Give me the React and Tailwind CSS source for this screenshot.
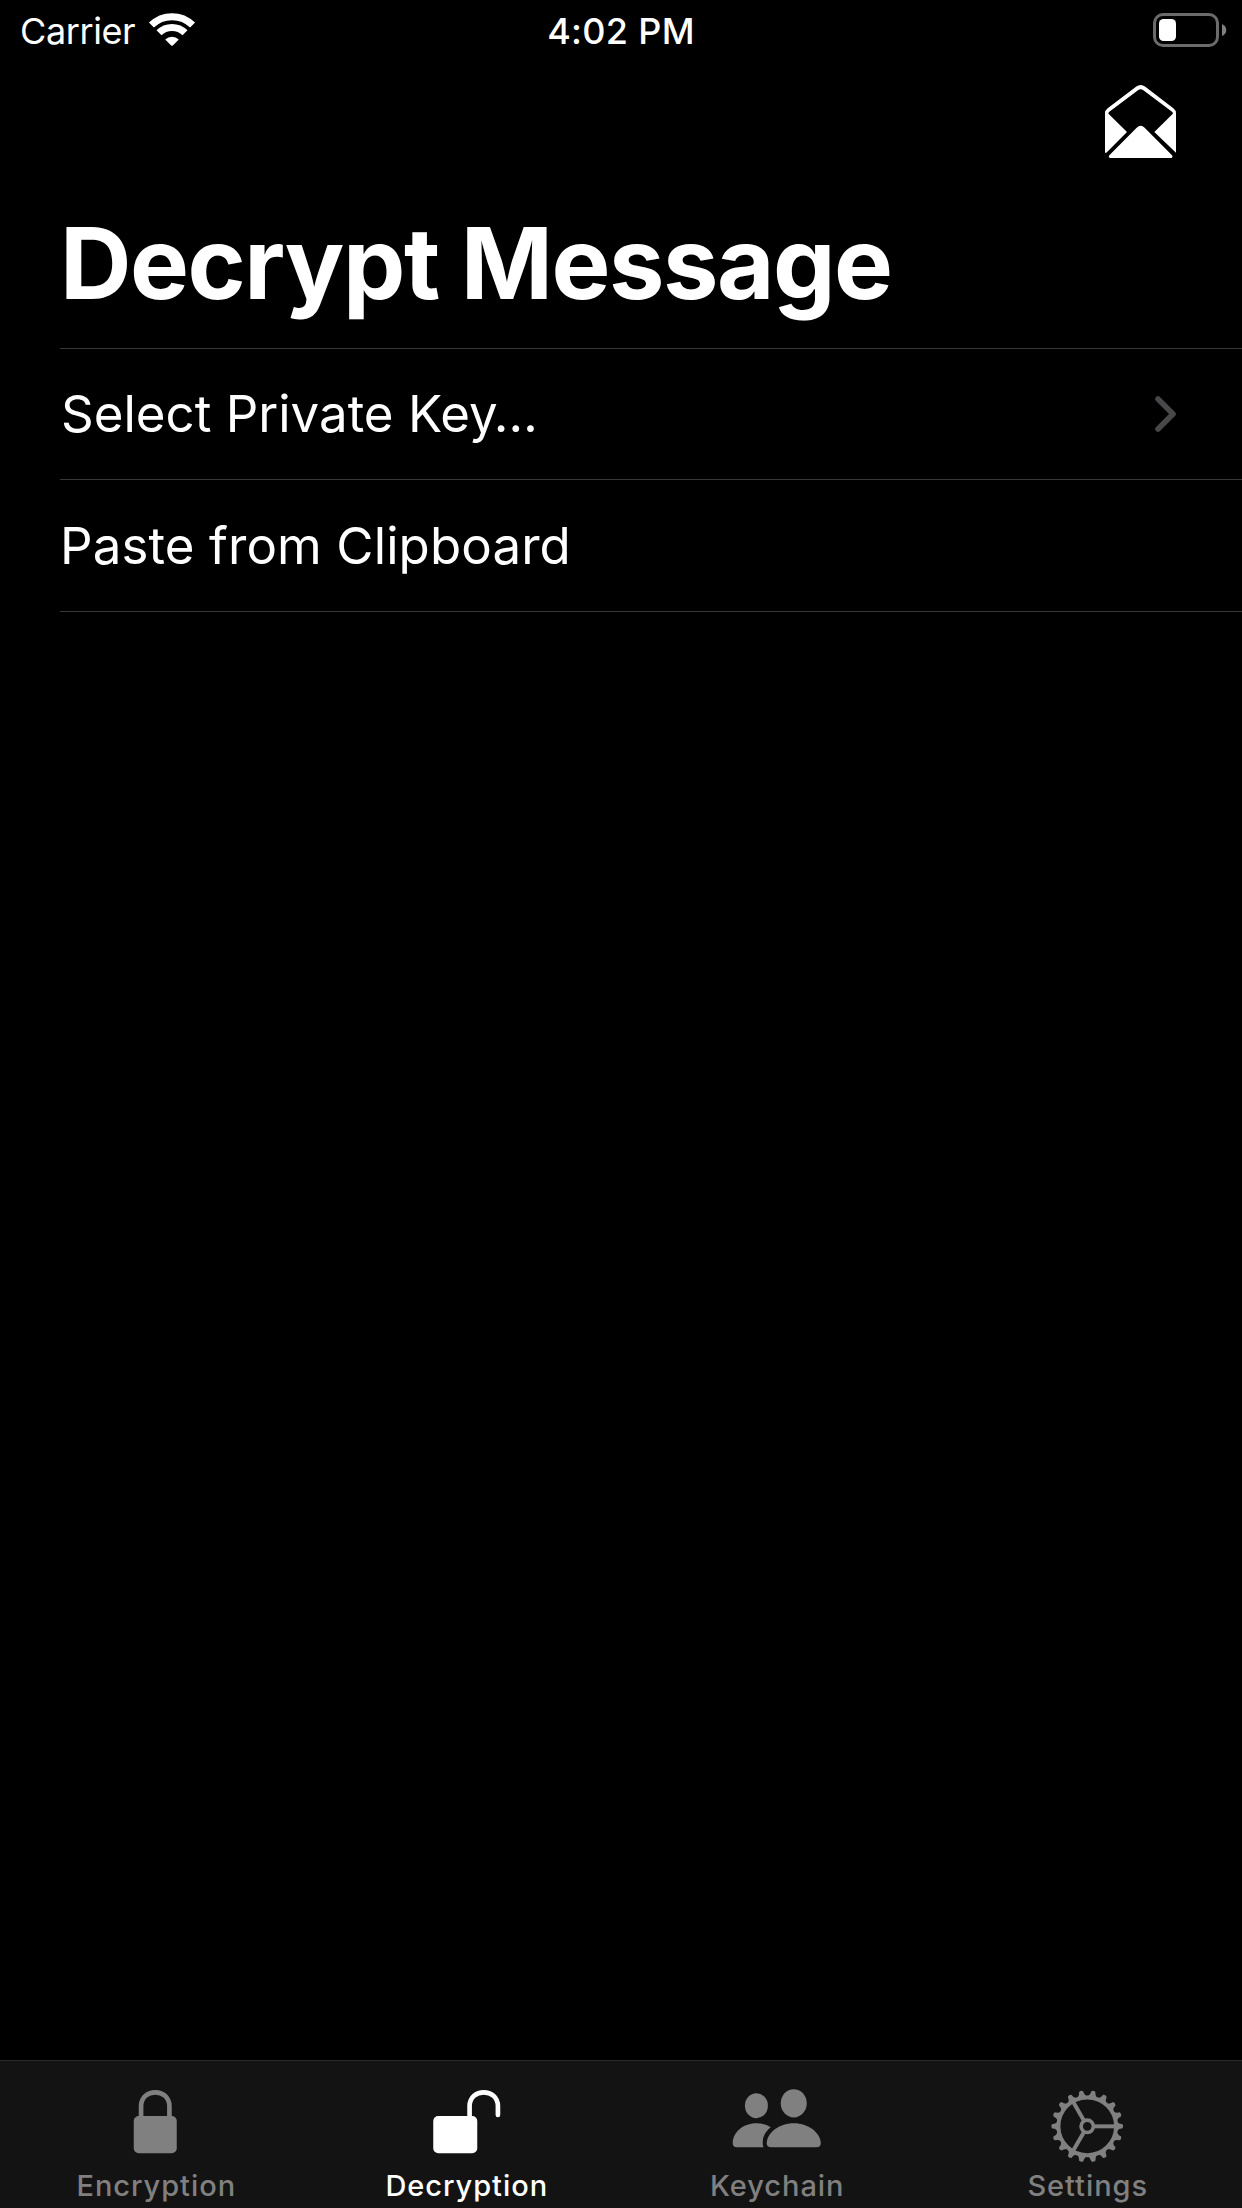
const teeth = Array.from({ length: 18 }, (_, i) => i * 20);

function Wifi() {
  return (
    <svg className="h-[34px] w-[48px]" viewBox="148 13 48 34" fill="none">
      <path d="M151.4 25.1 A29.3 29.3 0 0 1 192.6 25.1" stroke="#fff" strokeWidth="7" />
      <path d="M159 32.8 A18.4 18.4 0 0 1 185 32.8" stroke="#fff" strokeWidth="7" />
      <path d="M165.2 39.6 A9.8 9.8 0 0 1 178.8 39.6 L172.8 45.5 Q172 46.2 171.2 45.5 Z" fill="#fff" />
    </svg>
  );
}

function Battery() {
  return (
    <svg className="h-[34px] w-[74px]" viewBox="1153 13 74 34" fill="none">
      <rect x="1154.5" y="14.5" width="63" height="31" rx="8.5" stroke="#6b6b6b" strokeWidth="3" />
      <rect x="1159" y="19" width="17" height="22" rx="4.5" fill="#fff" />
      <path d="M1222 24 Q1226.3 26 1226.3 30 Q1226.3 34 1222 36 Z" fill="#808080" />
    </svg>
  );
}

function Envelope() {
  return (
    <svg className="h-[74px] w-[71px]" viewBox="75 42 213 222">
      <path
        fillRule="evenodd"
        fill="#fff"
        d="M75 248 V130 Q75 121 83 115 L168 50 Q182 40 196 50 L280 115 Q288 121 288 130 V248 L223 186 L277 133 Q281 129 276 125 L190 61 Q182 55 174 61 L88 125 Q83 129 87 133 L141 186 L79 248 Z"
      />
      <path fill="#fff" d="M170 173 Q182 162 194 173 L276 256 Q280 260 275 264 H89 Q84 260 88 256 Z" />
    </svg>
  );
}

function LockIcon() {
  return (
    <svg className="h-20 w-[100px]" viewBox="135.75 98 300 240" fill="none">
      <rect x="222" y="197" width="129" height="112" rx="15" fill="#808080" />
      <path d="M244 205 V168 C244 112 329 112 329 168 V205" stroke="#808080" strokeWidth="14" />
    </svg>
  );
}

function UnlockIcon() {
  return (
    <svg className="h-20 w-[100px]" viewBox="137.25 98 300 240" fill="none">
      <rect x="189" y="197" width="132" height="112" rx="15" fill="#fff" />
      <path
        d="M298 205 V168 C298 112 383 112 383 168 V194"
        stroke="#fff"
        strokeWidth="14"
        strokeLinecap="round"
      />
    </svg>
  );
}

function PeopleIcon() {
  return (
    <svg className="h-20 w-[100px]" viewBox="108.75 98 300 240" fill="#808080">
      <ellipse cx="200" cy="166" rx="34.5" ry="37.5" />
      <ellipse cx="312" cy="159" rx="39" ry="42.5" />
      <path d="M243 231 Q224 219 200 219 C158 219 129 248 129 279 Q129 291 141 291 H221 C214 268 224 246 243 231 Z" />
      <path d="M312 219 C266 219 231 250 231 279 Q231 291 244 291 H380 Q393 291 393 279 C393 250 358 219 312 219 Z" />
    </svg>
  );
}

function GearIcon() {
  return (
    <svg className="h-20 w-[100px]" viewBox="110.25 98 300 240" fill="none">
      <g transform="translate(261 228)" stroke="#808080">
        <circle r="86.5" strokeWidth="12" />
        <circle r="18.5" strokeWidth="11" />
        {[0, 120, 240].map((a) => (
          <path key={a} d="M22 0 H84" strokeWidth="12" transform={`rotate(${a})`} />
        ))}
        {teeth.map((a) => (
          <path
            key={a}
            d="M89 -14 Q95 -7 106 -6 Q110 0 106 6 Q95 7 89 14 Z"
            fill="#808080"
            stroke="none"
            transform={`rotate(${a})`}
          />
        ))}
      </g>
    </svg>
  );
}

const tabs = [
  { label: "Encryption", Icon: LockIcon },
  { label: "Decryption", Icon: UnlockIcon, active: true },
  { label: "Keychain", Icon: PeopleIcon },
  { label: "Settings", Icon: GearIcon },
];

export default function App() {
  return (
    <div className="flex h-[2208px] w-[1242px] flex-col overflow-hidden bg-black font-['Inter','Liberation_Sans',sans-serif] text-white">
      <div className="grid h-[62px] grid-cols-3 text-[36px] leading-[62px]">
        <div className="flex pl-5">
          <span className="w-[128px] tracking-[-0.4px]">Carrier</span>
          <div className="pt-[13px]">
            <Wifi />
          </div>
        </div>
        <div className="text-center font-medium tracking-[0.3px]">4:02 PM</div>
        <div className="flex justify-end pt-[13px] pr-[15px]">
          <Battery />
        </div>
      </div>

      <div className="flex justify-end pt-[22px] pr-[66px]">
        <Envelope />
      </div>

      <h1 className="mt-[45px] h-[145px] pl-[60px] text-[99px] leading-[120px] font-bold tracking-[-1.45px] whitespace-nowrap">
        Decrypt Message
      </h1>

      <div className="ml-[60px] flex flex-col text-[51px]">
        <div className="flex items-center justify-between border-t border-[#38383a] pr-[66px] leading-[130px]">
          <span className="pl-px">Select Private Key…</span>
          <svg className="h-9 w-[21px]" viewBox="0 0 21 36" fill="none">
            <path
              d="M3 3 L18 18 L3 33"
              stroke="#48484a"
              strokeWidth="5.6"
              strokeLinecap="round"
              strokeLinejoin="round"
            />
          </svg>
        </div>
        <div className="border-y border-[#38383a] leading-[131px] tracking-[0.1px]">
          Paste from Clipboard
        </div>
      </div>

      <div className="mt-auto grid h-[148px] grid-cols-4 border-t border-[#292929] bg-[#131313] pt-[22px]">
        {tabs.map(({ label, Icon, active }) => (
          <div key={label} className="flex flex-col items-center gap-[5px]">
            <Icon />
            <span
              className={`pl-[2px] text-[29px] leading-9 font-medium tracking-[0.95px] ${active ? "text-white" : "text-[#808080]"}`}
            >
              {label}
            </span>
          </div>
        ))}
      </div>
    </div>
  );
}
